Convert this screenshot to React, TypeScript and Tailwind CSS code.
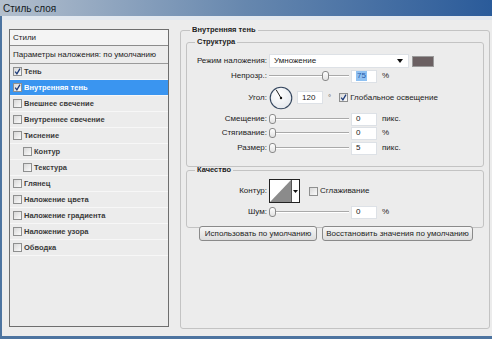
import React from "react";

const Check = ({ checked = false }: { checked?: boolean }) => (
  <span className="w-[9px] h-[9px] shrink-0 border border-[#8e8f8f] bg-linear-to-br from-[#d8d8d8] to-[#fbfbfb] flex items-center justify-center">
    {checked && (
      <svg width="7" height="7" viewBox="0 0 7 7">
        <path d="M1.2 3.6 L2.9 5.8 L6 0.6" stroke="#1c3a78" strokeWidth="1.3" fill="none" />
      </svg>
    )}
  </span>
);

const Slider = ({ pos }: { pos: number }) => (
  <div className="relative w-[80px] h-[12px] flex items-center shrink-0">
    <div className="w-full h-[2px] border-t border-t-[#a9a9a9] border-b border-b-white" />
    <div
      className="absolute top-[1px] w-[7px] h-[10px] rounded-[3px] border border-[#8a8a8a] bg-linear-to-b from-white to-[#e2e2e2]"
      style={{ left: pos }}
    />
  </div>
);

const Field = ({ value, selected }: { value: string; selected?: boolean }) => (
  <div className="w-[26px] h-[13px] shrink-0 bg-white border border-[#dde1e6] flex items-center pl-[4px]">
    {selected ? <span className="bg-[#8fc1f2] text-[#2559a8] px-[1px] leading-[10px]">{value}</span> : value}
  </div>
);

const Label = ({ children }: { children: React.ReactNode }) => (
  <span className="w-[82px] shrink-0 text-right pr-[2px]">{children}</span>
);

const SliderRow = ({ label, pos, value, unit, selected, className }: { label: string; pos: number; value: string; unit: string; selected?: boolean; className: string }) => (
  <div className={`flex items-center ${className}`}>
    <Label>{label}</Label>
    <Slider pos={pos} />
    <div className="ml-[2px]">
      <Field value={value} selected={selected} />
    </div>
    <span className="ml-[5px]">{unit}</span>
  </div>
);

const items: { name: string; checked?: boolean; active?: boolean; sub?: boolean }[] = [
  { name: "Тень", checked: true },
  { name: "Внутренняя тень", checked: true, active: true },
  { name: "Внешнее свечение" },
  { name: "Внутреннее свечение" },
  { name: "Тиснение" },
  { name: "Контур", sub: true },
  { name: "Текстура", sub: true },
  { name: "Глянец" },
  { name: "Наложение цвета" },
  { name: "Наложение градиента" },
  { name: "Наложение узора" },
  { name: "Обводка" },
];

export default function App() {
  return (
    <div className="w-[492px] h-[339px] overflow-hidden flex flex-col whitespace-nowrap font-['Liberation_Sans',Arial,sans-serif] text-[8px] text-[#222]">
      <div className="h-[16px] shrink-0 flex items-center pl-[3px] bg-linear-to-r from-[#b3bfcd] via-[#6687ae] to-[#2a5b9a]">
        <span className="text-[10px] text-[#141a22]">Стиль слоя</span>
      </div>
      <div className="flex-1 flex flex-col border-l-2 border-b-[3px] border-[#4d74a0] bg-[#ececec]">
        <div className="h-[4px] bg-[#e2e8ef]" />
        <div className="flex items-start pt-[4px] pl-[7px]">
          {/* left list */}
          <div className="mt-[5px] w-[160px] h-[298px] shrink-0 border border-[#6e6e6e] flex flex-col">
            <div className="h-[16px] flex items-center pl-[3px] bg-[#f4f4f4] border-b border-[#8c8c8c]">Стили</div>
            <div className="h-[18px] flex items-center pl-[3px] border-b border-[#9a9a9a]">Параметры наложения: по умолчанию</div>
            {items.map((it) => (
              <div
                key={it.name}
                className={`h-[16px] flex items-center gap-[2px] border-b border-b-[#f7f7f7] font-bold text-[7.5px] ${it.sub ? "pl-[13px]" : "pl-[3px]"} ${it.active ? "bg-[#3a95f0] text-white" : "text-[#3a3a3a]"}`}
              >
                <Check checked={it.checked} />
                <span>{it.name}</span>
              </div>
            ))}
          </div>

          {/* right settings */}
          <fieldset className="ml-[11px] w-[310px] h-[305px] shrink-0 border border-[#c3c3c3] rounded-[3px] px-[5px]">
            <legend className="ml-[4px] px-[2px] font-bold text-[7.5px] leading-[12px]">Внутренняя тень</legend>

            <fieldset className="border border-[#c3c3c3] rounded-[3px] pt-[5px] pb-[10px]">
              <legend className="ml-[8px] px-[2px] font-bold text-[7.5px] leading-[12px]">Структура</legend>
              <div className="flex items-center h-[16px]">
                <Label>Режим наложения:</Label>
                <div className="w-[140px] h-[14px] bg-white border border-[#dde1e6] flex items-center justify-between pl-[4px] pr-[5px]">
                  <span>Умножение</span>
                  <svg width="6" height="4" viewBox="0 0 6 4">
                    <path d="M0 0 H6 L3 4 Z" fill="#111" />
                  </svg>
                </div>
                <div className="ml-[3px] w-[22px] h-[11px] bg-[#6b6062] border border-[#9a9a9a]" />
              </div>
              <SliderRow className="h-[14px]" label="Непрозр.:" pos={53} value="75" unit="%" selected />
              <div className="flex items-center h-[29px]">
                <Label>Угол:</Label>
                <svg width="24" height="24" viewBox="0 0 24 24" className="shrink-0">
                  <defs>
                    <radialGradient id="dial" cx="40%" cy="35%" r="70%">
                      <stop offset="0%" stopColor="#ffffff" />
                      <stop offset="100%" stopColor="#e3e7ec" />
                    </radialGradient>
                  </defs>
                  <circle cx="12" cy="12" r="10.8" fill="url(#dial)" stroke="#34465e" strokeWidth="1.1" />
                  <line x1="12" y1="12" x2="7.2" y2="3.8" stroke="#222" strokeWidth="1" />
                  <circle cx="12" cy="12" r="1.2" fill="#111" />
                </svg>
                <div className="ml-[4px]">
                  <Field value="120" />
                </div>
                <span className="ml-[5px] text-[#555]">°</span>
                <div className="ml-[8px] flex items-center gap-[2px]">
                  <Check checked />
                  <span>Глобальное освещение</span>
                </div>
              </div>
              <SliderRow className="h-[14px]" label="Смещение:" pos={0} value="0" unit="пикс." />
              <SliderRow className="h-[14px]" label="Стягивание:" pos={0} value="0" unit="%" />
              <SliderRow className="h-[16px]" label="Размер:" pos={0} value="5" unit="пикс." />
            </fieldset>

            <fieldset className="-mt-[3px] border border-[#c3c3c3] rounded-[3px] pb-[9px]">
              <legend className="ml-[8px] px-[2px] font-bold text-[7.5px] leading-[12px]">Качество</legend>
              <div className="flex items-center h-[30px]">
                <Label>Контур:</Label>
                <div className="flex shrink-0 border border-[#222] bg-white">
                  <svg width="21" height="22" viewBox="0 0 21 22">
                    <rect width="21" height="22" fill="#fff" />
                    <polygon points="0,22 21,0 21,22" fill="#8b8b8b" />
                  </svg>
                  <div className="w-[8px] h-[22px] border-l border-[#555] flex items-center justify-center">
                    <svg width="5" height="3" viewBox="0 0 5 3">
                      <path d="M0 0 H5 L2.5 3 Z" fill="#111" />
                    </svg>
                  </div>
                </div>
                <div className="ml-[9px] flex items-center gap-[2px]">
                  <Check />
                  <span>Сглаживание</span>
                </div>
              </div>
              <SliderRow className="h-[12px]" label="Шум:" pos={0} value="0" unit="%" />
            </fieldset>

            <div className="flex gap-[5px] pl-[13px] -mt-[2px]">
              <button className="w-[118px] h-[15px] border border-[#8a8a8a] rounded-[3px] bg-linear-to-b from-[#f7f7f7] to-[#dcdcdc] text-[8px] text-[#222]">
                Использовать по умолчанию
              </button>
              <button className="w-[151px] h-[15px] border border-[#8a8a8a] rounded-[3px] bg-linear-to-b from-[#f7f7f7] to-[#dcdcdc] text-[8px] text-[#222]">
                Восстановить значения по умолчанию
              </button>
            </div>
          </fieldset>
        </div>
      </div>
    </div>
  );
}
